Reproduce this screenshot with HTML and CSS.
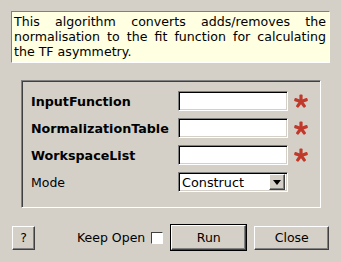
FILE: index.html
```html
<!DOCTYPE html>
<html>
<head>
<meta charset="utf-8">
<link rel="stylesheet" href="styles.css">
</head>
<body>
<div class="dialog">
  <div class="desc">This algorithm converts adds/removes the normalisation to the fit function for calculating the TF asymmetry.</div>
  <div class="group">
    <div class="row">
      <span class="label bold">InputFunction</span>
      <span class="field"></span>
      <svg class="star" width="16" height="16" viewBox="0 0 16 16"><g transform="translate(8 8.5)" fill="#c0392b"><rect x="-1.6" y="-7" width="3.2" height="7" rx="1"/><rect x="-1.6" y="-7" width="3.2" height="7" rx="1" transform="rotate(72)"/><rect x="-1.6" y="-7" width="3.2" height="7" rx="1" transform="rotate(144)"/><rect x="-1.6" y="-7" width="3.2" height="7" rx="1" transform="rotate(216)"/><rect x="-1.6" y="-7" width="3.2" height="7" rx="1" transform="rotate(288)"/></g></svg>
    </div>
    <div class="row">
      <span class="label bold">NormalizationTable</span>
      <span class="field"></span>
      <svg class="star" width="16" height="16" viewBox="0 0 16 16"><g transform="translate(8 8.5)" fill="#c0392b"><rect x="-1.6" y="-7" width="3.2" height="7" rx="1"/><rect x="-1.6" y="-7" width="3.2" height="7" rx="1" transform="rotate(72)"/><rect x="-1.6" y="-7" width="3.2" height="7" rx="1" transform="rotate(144)"/><rect x="-1.6" y="-7" width="3.2" height="7" rx="1" transform="rotate(216)"/><rect x="-1.6" y="-7" width="3.2" height="7" rx="1" transform="rotate(288)"/></g></svg>
    </div>
    <div class="row">
      <span class="label bold">WorkspaceList</span>
      <span class="field"></span>
      <svg class="star" width="16" height="16" viewBox="0 0 16 16"><g transform="translate(8 8.5)" fill="#c0392b"><rect x="-1.6" y="-7" width="3.2" height="7" rx="1"/><rect x="-1.6" y="-7" width="3.2" height="7" rx="1" transform="rotate(72)"/><rect x="-1.6" y="-7" width="3.2" height="7" rx="1" transform="rotate(144)"/><rect x="-1.6" y="-7" width="3.2" height="7" rx="1" transform="rotate(216)"/><rect x="-1.6" y="-7" width="3.2" height="7" rx="1" transform="rotate(288)"/></g></svg>
    </div>
    <div class="row">
      <span class="label">Mode</span>
      <span class="combo"><span class="combo-text">Construct</span><span class="combo-btn"><svg width="8" height="5" viewBox="0 0 8 5"><path d="M0 0H8L4 5Z" fill="#000"/></svg></span></span>
    </div>
  </div>
  <div class="buttons">
    <span class="btn help">?</span>
    <span class="keep">Keep Open</span>
    <span class="check"></span>
    <span class="default"><span class="btn run">Run</span></span>
    <span class="btn close">Close</span>
  </div>
</div>
</body>
</html>
```
FILE: styles.css
```css
html, body {
  margin: 0;
  padding: 0;
  background: #d4d0c8;
}
body {
  font-family: "DejaVu Sans", sans-serif;
  font-size: 12.5px;
  color: #000;
}
.dialog {
  width: 341px;
  height: 262px;
  box-sizing: border-box;
  padding: 11px 11px 0 11px;
  display: flex;
  flex-direction: column;
}
.desc {
  width: 319px;
  height: 52px;
  box-sizing: border-box;
  background: #ffffe1;
  border: 1px solid;
  border-color: #808080 #ffffff #ffffff #808080;
  padding: 2px 3px 0 2px;
  line-height: 15px;
  font-size: 12.6px;
  text-align: justify;
}
.group {
  margin: 17px 0 0 10px;
  width: 300px;
  height: 128px;
  box-sizing: border-box;
  border: 1px solid;
  border-color: #808080 #ffffff #ffffff #808080;
  box-shadow: inset 1px 1px 0 #404040;
  padding: 10px 0 0 9px;
  display: flex;
  flex-direction: column;
  gap: 7px;
}
.row {
  display: flex;
  align-items: center;
  height: 20px;
}
.label {
  width: 147px;
}
.bold {
  font-weight: bold;
  font-size: 12.7px;
}
.field, .combo {
  width: 110px;
  height: 20px;
  box-sizing: border-box;
  background: #fff;
  border: 1px solid;
  border-color: #808080 #ffffff #ffffff #808080;
  box-shadow: inset 1px 1px 0 #000, inset -1px -1px 0 #d4d0c8;
}
.star {
  margin-left: 5px;
}
.combo {
  display: flex;
  align-items: center;
  justify-content: space-between;
  padding: 2px 2px 2px 3px;
  font-size: 12.8px;
}
.combo-btn {
  width: 16px;
  height: 16px;
  box-sizing: border-box;
  background: #d4d0c8;
  border: 1px solid;
  border-color: #ffffff #404040 #404040 #ffffff;
  box-shadow: inset -1px -1px 0 #808080;
  display: flex;
  align-items: center;
  justify-content: center;
}
.buttons {
  margin-top: 16px;
  display: flex;
  align-items: center;
  margin-left: 1px;
}
.btn {
  display: flex;
  align-items: center;
  justify-content: center;
  box-sizing: border-box;
  height: 24px;
  background: #d4d0c8;
  border: 1px solid;
  border-color: #ffffff #404040 #404040 #ffffff;
  box-shadow: inset -1px -1px 0 #808080;
}
.help {
  width: 23px;
}
.keep {
  margin-left: 42px;
}
.check {
  margin-left: 6px;
  width: 12px;
  height: 12px;
  box-sizing: border-box;
  background: #fff;
  border: 1px solid;
  border-color: #404040 #ffffff #ffffff #404040;
}
.default {
  margin-left: 7px;
  border: 1px solid #000;
  display: flex;
}
.run {
  width: 75px;
  height: 25px;
}
.close {
  margin-left: 7px;
  width: 75px;
}
```
